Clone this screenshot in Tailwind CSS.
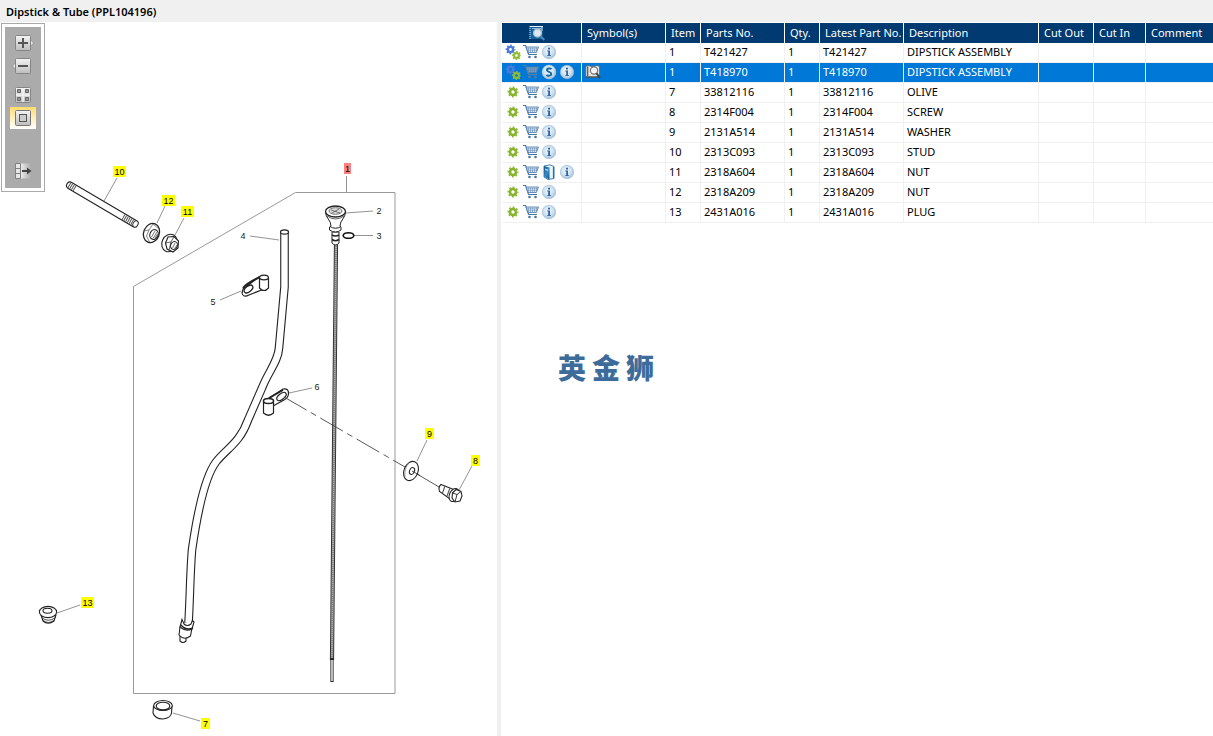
<!DOCTYPE html>
<html lang="en">
<head>
  <meta charset="UTF-8" />
  <meta name="viewport" content="width=device-width, initial-scale=1" />
  <title>Dipstick &amp; Tube (PPL104196)</title>
  <script src="https://cdn.jsdelivr.net/npm/@tailwindcss/browser@4"></script>
</head>
<body class="min-h-screen flex flex-col bg-white text-black font-['Noto_Sans','Open_Sans',sans-serif] text-[11px] leading-4">

<!-- Shared icons -->
<svg class="absolute size-0" aria-hidden="true">
  <defs>
    <linearGradient id="btn" x1="0" y1="0" x2="0" y2="1"><stop offset="0" stop-color="#f4f4f4"/><stop offset="1" stop-color="#bdbdbd"/></linearGradient>
    <linearGradient id="fade" x1="0" y1="0" x2="1" y2="0"><stop offset="0" stop-color="#f0f0f0"/><stop offset="1" stop-color="#ababab"/></linearGradient>
    <radialGradient id="ball" cx=".45" cy=".4" r=".6"><stop offset="0" stop-color="#f0f7fb"/><stop offset=".6" stop-color="#cfe2f0"/><stop offset="1" stop-color="#a3c2dc"/></radialGradient>
    <linearGradient id="cover" x1="0" y1="0" x2="1" y2="1"><stop offset="0" stop-color="#14507f"/><stop offset=".5" stop-color="#3c8cc6"/><stop offset="1" stop-color="#0e5a94"/></linearGradient>
  </defs>
  <symbol id="gear" viewBox="0 0 16 16">
    <g fill="none" stroke="#86b52c"><circle cx="8" cy="8" r="3" stroke-width="2.6"/><circle cx="8" cy="8" r="4.8" stroke-width="1.4" stroke-dasharray="1.885" stroke-dashoffset=".94"/></g>
  </symbol>
  <symbol id="gears" viewBox="0 0 16 16">
    <g fill="none" stroke="#4a7bdc"><circle cx="5.500" cy="5.500" r="2.600" stroke-width="2.400"/><circle cx="5.500" cy="5.500" r="4.200" stroke-width="1.400" stroke-dasharray="1.649" stroke-dashoffset=".825"/></g>
    <g fill="none" stroke="#8fbe33"><circle cx="11.500" cy="11.500" r="2.400" stroke-width="2.200"/><circle cx="11.500" cy="11.500" r="3.900" stroke-width="1.400" stroke-dasharray="1.532" stroke-dashoffset=".766"/></g>
  </symbol>
  <symbol id="cart" viewBox="0 0 16 16">
    <path d="M0 1.500H2.600L5.500 10.500H14" fill="none" stroke="#4775a8" stroke-width="1.100"/>
    <path d="M3.200 3H15.500L13.400 8.500H4.800Z" fill="#dfe9f2" stroke="#4775a8" stroke-width=".8"/>
    <path d="M5.500 3.500V8M7.500 3.500V8M9.500 3.500V8M11.500 3.500V8M13.500 3.500V7M3.800 4.800H14.600M4.200 6.600H14" stroke="#4775a8" stroke-width=".4"/>
    <circle cx="6.500" cy="13" r="1.300" fill="#4775a8"/><circle cx="12.500" cy="13" r="1.300" fill="#4775a8"/>
  </symbol>
  <!-- greyed outline so the cart still reads on the highlighted row -->
  <symbol id="cart-selected" viewBox="0 0 16 16">
    <path d="M0 1.500H2.600L5.500 10.500H14" fill="none" stroke="#5f7f9f" stroke-width="1.100"/>
    <path d="M3.200 3H15.500L13.400 8.500H4.800Z" fill="#6fa3d6" stroke="#5f7f9f" stroke-width=".8"/>
    <path d="M5.500 3.500V8M7.500 3.500V8M9.500 3.500V8M11.500 3.500V8M13.500 3.500V7M3.800 4.800H14.600M4.200 6.600H14" stroke="#5f7f9f" stroke-width=".5"/>
    <circle cx="6.500" cy="13" r="1.300" fill="#5f7f9f"/><circle cx="12.500" cy="13" r="1.300" fill="#5f7f9f"/>
  </symbol>
  <symbol id="info" viewBox="0 0 16 16">
    <circle cx="8" cy="8" r="6.700" fill="url(#ball)" stroke="#9cbcd7" stroke-width=".7"/>
    <path d="M7 3.800H9V5.600H7ZM6.200 6.600H9V11.200H10V12H6.200V11.200H7.200V7.500H6.200Z" fill="#33639c"/>
  </symbol>
  <symbol id="super" viewBox="0 0 16 16">
    <circle cx="8" cy="8" r="6.900" fill="url(#ball)" stroke="#b9d6ea" stroke-width=".5"/>
    <path d="M10.500 5.100C9 4 5.900 4.100 5.900 6.100C5.900 8.200 10.300 7.500 10.300 9.900C10.300 12 7 12.100 5.400 10.900" fill="none" stroke="#13679a" stroke-width="1.900"/>
  </symbol>
  <symbol id="book" viewBox="0 0 16 16">
    <path d="M3 2L9 .8L13 2.500V14.500L7 15.500L3 13Z" fill="#e8f3fa" stroke="#1c669c" stroke-width=".8"/>
    <path d="M3 2L8.500 3.600V15.500L3 13Z" fill="url(#cover)"/>
    <path d="M4.200 4.500L7.200 5.400V7.200L4.200 6.300Z" fill="#9fcbe8"/>
    <path d="M12.500 3V14" stroke="#2673a8" stroke-width="1.200"/>
  </symbol>
  <symbol id="lookup" viewBox="0 0 16 16">
    <path d="M.8 2.500L3 1.500L7.500 2.700L12 1.500L14.500 2.500V12.500L8 13L.8 12.500Z" fill="#e5e5e0" stroke="#666" stroke-width=".8"/>
    <path d="M.5 13H14M2.700 2.500V12" stroke="#555" stroke-width="1.200"/>
    <circle cx="9" cy="6.500" r="3.600" fill="#f5f5f5" stroke="#777" stroke-width="1.200"/>
    <path d="M11.400 9.200L15 13.800" stroke="#444" stroke-width="2"/>
  </symbol>
  <symbol id="preview" viewBox="0 0 16 16">
    <path d="M.5 1H13.500V14H.5Z" fill="#12639c"/>
    <path d="M1 1V14" stroke="#d3e8f4" stroke-dasharray="1 1"/>
    <path d="M1 1.500H14M13 2V6" stroke="#e5f2f9"/>
    <path d="M3 3.500H12" stroke="#8bb9d8"/>
    <circle cx="8.500" cy="8" r="4" fill="#dce7ef" stroke="#a9bccb" stroke-width="1.300"/>
    <path d="M11.500 11L15.300 15" stroke="#4c87b5" stroke-width="2.200"/>
  </symbol>
</svg>

<header class="h-[22px] bg-[#f0f0f0] px-1.5 pt-1">
  <h1 class="font-semibold">Dipstick &amp; Tube (PPL104196)</h1>
</header>

<main class="grow grid grid-cols-[497fr_4px_712fr]">

  <!-- Illustration -->
  <section class="relative" aria-label="Illustration">
    <svg class="block w-full" viewBox="0 22 497 714" font-family="Liberation Sans, Arial, sans-serif" font-size="9" text-anchor="middle">
      <!-- assembly frame and leaders -->
      <path d="M133.500 286.500L295.500 192.500H395V693.500H133.500Z" fill="none" stroke="#999"/>
      <g fill="none" stroke="#777" stroke-width=".8">
        <path d="M346.500 176V192M346 213L373 211M354 235.500H373M250 236L279 240M220 300L241 291M289 393L312 388M117 178L104 201M165 206L157 223M184 218L175 235M427 440L417 461M472 466L459 490M57 613L80 605M173 713L200 721"/>
      </g>

      <!-- dipstick -->
      <path d="M336 244L333.500 500L332 660" fill="none" stroke="#333" stroke-width="4.200"/>
      <path d="M336 244L333.500 500L332 660" fill="none" stroke="#aaa" stroke-width="2.200"/>
      <path d="M336 244L333.500 500L332 660" fill="none" stroke="#777" stroke-width="2" stroke-dasharray=".7 1.300"/>
      <path d="M332 658V682" fill="none" stroke="#222" stroke-width="3.200"/>
      <path d="M332 660V681" fill="none" stroke="#fff" stroke-width="1.400"/>
      <g fill="#fff" stroke="#222">
        <path d="M332 232V243Q335.500 247 339 243V232Z"/>
        <path d="M332 235Q335.500 237 339 235M332 239.500Q335.500 242 339 239.500" stroke-width="1.600" fill="none"/>
        <path d="M325.500 212C325.500 218 331 220 331 226L329.500 227V230Q335.500 234 341 230V227L340 226C340 220 345.500 218 345.500 212Z"/>
        <path d="M330 226.500Q335.500 230 341 226.500" fill="none"/>
        <ellipse cx="335.500" cy="211.500" rx="10" ry="5.500" stroke-width="1.300"/>
        <ellipse cx="335.500" cy="211" rx="6.500" ry="3.300" stroke="#777" fill="#ddd"/>
        <path d="M331 210L340 213M332 213L339 209" stroke="#555" stroke-width=".8"/>
        <path d="M327 216Q335.500 222 344 216" fill="none" stroke-width=".7"/>
        <ellipse cx="348.500" cy="235.500" rx="5.300" ry="2.800" stroke="#111" stroke-width="1.600"/>
      </g>

      <!-- tube -->
      <path d="M284.500 233V287L279 348C278 362 268 372 262 388L248 420C240 443 226 449 216 462C204 478 196 522 192 550C190 575 190 600 188.500 623" fill="none" stroke="#222" stroke-width="8.600"/>
      <path d="M284.500 233V287L279 348C278 362 268 372 262 388L248 420C240 443 226 449 216 462C204 478 196 522 192 550C190 575 190 600 188.500 623" fill="none" stroke="#fff" stroke-width="6.400"/>
      <ellipse cx="284.500" cy="232" rx="4" ry="2.200" fill="#fff" stroke="#222" stroke-width="1.200"/>
      <g fill="#fff" stroke="#222" stroke-width="1.100">
        <path d="M180 636V641Q183 644 186 641V636Z"/>
        <path d="M180 627L179 635Q184 641 190.500 636L192 628Z"/>
        <path d="M182 619.500L180 627Q186 632 192 629L194 622L192.500 620.500L191 624Q187 627 184 624Z"/>
        <path d="M181 625Q186 631 193 628" fill="none" stroke-width="1.500"/>
      </g>

      <!-- clips -->
      <g fill="#fff" stroke="#222" stroke-width="1.200">
        <path d="M243 289L259 277L264 289L249 295Q243 298 242 293Z"/>
        <path d="M243 288Q247 283 260 277" stroke-width="2" fill="none"/>
        <ellipse cx="248.500" cy="289" rx="5" ry="2.800" transform="rotate(-38 248.500 289)" stroke-width="1.300"/>
        <path d="M259.500 278V288Q264 293 268.500 288V278Z"/>
        <ellipse cx="264" cy="277.500" rx="4.400" ry="2.300"/>
        <path d="M268 399L283 389Q289 388 288.500 394Q288 398 284 400L273 406Z"/>
        <path d="M269 398L283 390" stroke-width="2" fill="none"/>
        <ellipse cx="281.500" cy="396.500" rx="5.500" ry="2.800" transform="rotate(-38 281.500 396.500)"/>
        <path d="M263.500 401V413Q268.500 417.500 273.500 413V401Z"/>
        <ellipse cx="268.500" cy="401" rx="5" ry="2.500" stroke-width="1.500"/>
      </g>
      <path d="M284 397L405 467" fill="none" stroke="#444" stroke-width=".9" stroke-dasharray="26 5 6 5"/>
      <path d="M412 471L439 487" fill="none" stroke="#444" stroke-width=".9"/>

      <!-- stud -->
      <path d="M70 185.500L134.500 223.500" fill="none" stroke="#222" stroke-width="8" stroke-linecap="round"/>
      <path d="M70 185.500L134.500 223.500" fill="none" stroke="#fff" stroke-width="5.800" stroke-linecap="round"/>
      <path d="M69 185L75 188.500M123 217L134 223" fill="none" stroke="#555" stroke-width="6" stroke-dasharray="1 1"/>
      <ellipse cx="135.500" cy="224" rx="2.400" ry="3.200" transform="rotate(30 135.500 224)" fill="#fff" stroke="#333" stroke-width=".9"/>

      <!-- nuts -->
      <g fill="#fff" stroke="#222" stroke-width="1.100">
        <ellipse cx="151.500" cy="233" rx="7.800" ry="9.800" transform="rotate(22 151.500 233)" stroke-width="1.300"/>
        <path d="M144 231L149 230L153 224M149 230L146.500 236L149.500 242M153 224L159 229" fill="none" stroke="#666" stroke-width=".8"/>
        <ellipse cx="154" cy="234.500" rx="4" ry="5" transform="rotate(25 154 234.500)"/>
        <path d="M151.500 237L155 231M153 238.500L157 232M155 238L157.500 234" stroke="#555" stroke-width=".8"/>
        <ellipse cx="169.500" cy="243" rx="7.500" ry="9" transform="rotate(25 169.500 243)"/>
        <path d="M165.500 243L168 237L174 236.500L178.500 241L178 248L173 252L167 249Z"/>
        <path d="M165.500 243L171 242L174 236.500M171 242L169 250" fill="none" stroke="#444" stroke-width=".8"/>
        <ellipse cx="174" cy="245.500" rx="3.300" ry="4" transform="rotate(25 174 245.500)"/>
        <path d="M172.500 248L175 243M174.500 249L177 245" stroke="#555" stroke-width=".8"/>
      </g>

      <!-- washer and screw -->
      <g fill="#fff" stroke="#222" stroke-width="1.100">
        <ellipse cx="411" cy="471" rx="7" ry="10" transform="rotate(22 411 471)"/>
        <path d="M405 477Q404 468 409 463" fill="none" stroke="#777" stroke-width=".7"/>
        <ellipse cx="412" cy="471" rx="2.400" ry="3.500" transform="rotate(22 412 471)"/>
        <path d="M412 471L420 475.500" stroke-width=".8"/>
        <path d="M441 484.500L455 490L450 499L439.500 491.500Q438 487 441 484.500Z"/>
        <path d="M445 486L442.500 493M450 488L447 496" stroke="#555" fill="none"/>
        <ellipse cx="454" cy="495" rx="4.500" ry="6.800" transform="rotate(25 454 495)"/>
        <path d="M452.500 493L456 489.500L461 491.500L462 496L460 501L455 502L452 498Z"/>
        <path d="M452.500 493L457 494.500L461 491.500M457 494.500L455 502" fill="none" stroke-width=".9"/>
      </g>

      <!-- plug and olive -->
      <g fill="#fff" stroke="#222" stroke-width="1.100">
        <path d="M41 615L43 621Q48 625.500 54 621L56 615Z"/>
        <path d="M41.500 617.500Q48 623 55.500 617.500M42.500 620Q48 625 54.500 620" fill="none" stroke-width=".8"/>
        <ellipse cx="48" cy="612" rx="8.600" ry="5.600"/>
        <ellipse cx="47.500" cy="610.800" rx="4.500" ry="2.500"/>
        <path d="M153.500 706L153 713Q155 719 163 719Q171 718 171.500 713L172 706Z"/>
        <ellipse cx="163" cy="705.500" rx="9.300" ry="5"/>
        <ellipse cx="163" cy="706" rx="6.800" ry="3.800"/>
      </g>

      <!-- plain callouts -->
      <g fill="#222">
        <text x="379" y="214">2</text>
        <text x="379" y="239">3</text>
        <text x="243" y="239">4</text>
        <text x="213" y="305">5</text>
        <text x="317" y="390">6</text>
      </g>
      <!-- linked callouts, filled by the script below -->
      <g id="hotspots"></g>
    </svg>

    <!-- View toolbar -->
    <div class="absolute left-px top-px border border-[#a9a9a9] bg-white p-[3px]">
      <div class="w-9 bg-[#ababab] flex flex-col items-center pt-[5px] pb-1.5">
        <button type="button" aria-label="Zoom in" class="block">
          <svg class="size-[22px]" viewBox="0 0 22 22"><path d="M18 7L21.500 11L18 15Z" fill="#e8e8e8" stroke="#888" stroke-width=".7"/><rect x="3.500" y="3.500" width="15" height="15" rx="1" fill="url(#btn)" stroke="#858585"/><path d="M6 11H16M11 6V16" stroke="#555" stroke-width="2"/></svg>
        </button>
        <button type="button" aria-label="Zoom out" class="block mt-px">
          <svg class="size-[22px]" viewBox="0 0 22 22"><path d="M4 7L.5 11L4 15Z" fill="#e8e8e8" stroke="#888" stroke-width=".7"/><rect x="3.500" y="3.500" width="15" height="15" rx="1" fill="url(#btn)" stroke="#858585"/><path d="M6 11H16" stroke="#555" stroke-width="2"/></svg>
        </button>
        <button type="button" aria-label="Tile view" class="block mt-[7px]">
          <svg class="size-[22px]" viewBox="0 0 22 22"><rect x="3.500" y="3.500" width="15" height="15" rx="1" fill="url(#btn)" stroke="#858585"/><path d="M11 4V18M4 11H18" stroke="#f2f2f2" stroke-width="1.500"/><path d="M5.500 5.500H8.500V8.500H5.500ZM13.500 5.500H16.500V8.500H13.500ZM5.500 13.500H8.500V16.500H5.500ZM13.500 13.500H16.500V16.500H13.500Z" fill="#999" stroke="#666"/></svg>
        </button>
        <button type="button" aria-label="Fit to window" aria-pressed="true" class="block w-[26px] bg-linear-to-b from-[#ffdc6b] to-white mt-px">
          <svg class="size-[22px] mx-auto" viewBox="0 0 22 22"><rect x="3.500" y="3.500" width="15" height="15" rx="1" fill="url(#btn)" stroke="#777"/><rect x="7.500" y="7.500" width="7" height="7" fill="#ccc" stroke="#555"/></svg>
        </button>
        <button type="button" aria-label="Hide panel" class="block mt-[31px]">
          <svg class="size-[22px]" viewBox="0 0 22 22"><path d="M8 3.500H19V18.500H8Z" fill="url(#fade)"/><path d="M3.500 3.500H8.500V18.500H3.500ZM3.500 8.500H8.500M3.500 13.500H8.500" fill="#e6e6e6" stroke="#808080"/><path d="M10 11H17" stroke="#444" stroke-width="2"/><path d="M15 7.500L19.500 11L15 14.500Z" fill="#444"/></svg>
        </button>
      </div>
    </div>
  </section>

  <div class="bg-[#f0f0f0]"></div>

  <!-- Parts list -->
  <section class="pt-px pl-px" aria-label="Parts list">
    <table class="w-full table-fixed border-separate border-spacing-0">
      <colgroup>
        <col class="w-20" /><col class="w-21" /><col class="w-[35px]" /><col class="w-21" /><col class="w-[35px]" />
        <col class="w-21" /><col class="w-[135px]" /><col class="w-[55px]" /><col class="w-[52px]" /><col />
      </colgroup>
      <thead>
        <tr id="head" class="h-5 bg-[#003a70] text-white text-left"></tr>
      </thead>
      <tbody id="parts"></tbody>
    </table>
    <p class="mt-[126px] ml-14 flex gap-1.5 font-['Noto_Sans_CJK_SC',sans-serif] font-black text-[28px] leading-9 text-[#3e6c9a]" lang="zh-CN"><span>英</span><span>金</span><span>狮</span></p>
  </section>
</main>

<script>
  const columns = ["", "Symbol(s)", "Item", "Parts No.", "Qty.", "Latest Part No.", "Description", "Cut Out", "Cut In", "Comment"];

  const parts = [
    { icons: ["gears", "cart", "info"], item: 1, no: "T421427", name: "DIPSTICK ASSEMBLY" },
    { icons: ["gears", "cart-selected", "super", "info"], item: 1, no: "T418970", name: "DIPSTICK ASSEMBLY", symbol: "lookup", selected: true },
    { icons: ["gear", "cart", "info"], item: 7, no: "33812116", name: "OLIVE" },
    { icons: ["gear", "cart", "info"], item: 8, no: "2314F004", name: "SCREW" },
    { icons: ["gear", "cart", "info"], item: 9, no: "2131A514", name: "WASHER" },
    { icons: ["gear", "cart", "info"], item: 10, no: "2313C093", name: "STUD" },
    { icons: ["gear", "cart", "book", "info"], item: 11, no: "2318A604", name: "NUT" },
    { icons: ["gear", "cart", "info"], item: 12, no: "2318A209", name: "NUT" },
    { icons: ["gear", "cart", "info"], item: 13, no: "2431A016", name: "PLUG" },
  ];

  const labels = { gear: "Part", gears: "Assembly", cart: "Add to cart", "cart-selected": "Add to cart", info: "Information", super: "Supersession", book: "Manual", lookup: "Look up" };

  // item number, centre x, top y
  const hotspots = [[10, 119, 166], [12, 168, 195], [11, 187, 206], [1, 347, 163], [9, 429, 428], [8, 475, 455], [13, 87, 597], [7, 205, 718]];

  function icon(name) {
    return `<button type="button" aria-label="${labels[name]}" class="block"><svg class="size-4"><use href="#${name}"/></svg></button>`;
  }

  document.getElementById("head").innerHTML = columns.map(c => c
    ? `<th scope="col" class="p-0 pl-[5px] font-normal whitespace-nowrap border-r border-white last:border-r-0">${c}</th>`
    : `<th scope="col" aria-label="Preview" class="p-0 border-r border-white"><svg class="size-4 ml-[27px]"><use href="#preview"/></svg></th>`
  ).join("");

  document.getElementById("parts").innerHTML = parts.map(p => {
    const cells = [
      `<div class="flex gap-0.5">${p.icons.map(icon).join("")}</div>`,
      p.symbol ? icon(p.symbol) : "",
      p.item, p.no, 1, p.no, p.name, "", "", "",
    ];
    const row = p.selected ? "h-5 bg-[#0078d7] text-white" : "h-5";
    return `<tr id="item-${p.item}${p.selected ? "-selected" : ""}" class="${row}">${cells.map(c => `<td class="p-0 pl-[3px] pb-0.5 whitespace-nowrap border-r border-b border-[#f0f0f0] last:border-r-0">${c}</td>`).join("")}</tr>`;
  }).join("");

  document.getElementById("hotspots").innerHTML = hotspots.map(([n, x, y]) => {
    const w = n > 9 ? 13 : n === 1 ? 7 : 9;
    return `<a href="#item-${n}"><rect x="${x - (w - 1) / 2}" y="${y}" width="${w}" height="11" fill="${n === 1 ? "#ff8080" : "#ffff00"}"/><text x="${x + 0.5}" y="${y + 9}">${n}</text></a>`;
  }).join("");
</script>

</body>
</html>
